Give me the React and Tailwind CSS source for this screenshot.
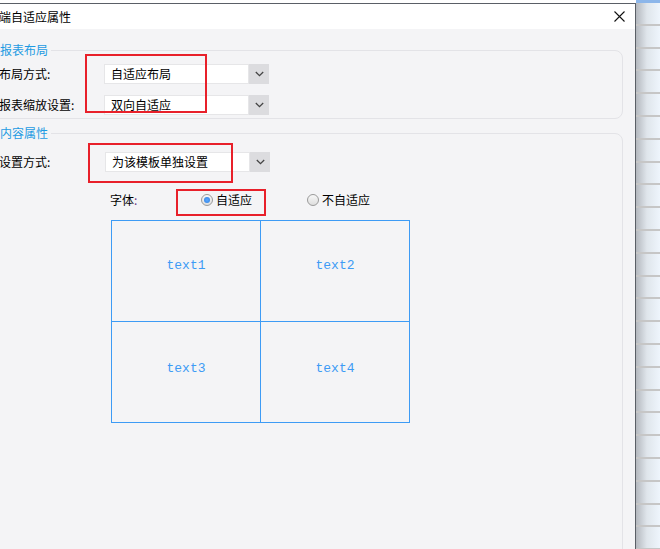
import React from "react";

const CJK = { fontFamily: '"Noto Sans CJK SC", "Noto Sans", sans-serif' };

function Chevron() {
  return (
    <svg width="9" height="6" viewBox="0 0 9 6">
      <path d="M0.8 1 L4.5 4.6 L8.2 1" fill="none" stroke="#444" strokeWidth="1.3" />
    </svg>
  );
}

function Select({ value }) {
  return (
    <div className="flex h-[20px] w-[165px]">
      <div className="flex-1 bg-white border border-[#e6e6e8] pl-[6px] flex items-center text-[12px] leading-[16px] text-black">
        {value}
      </div>
      <div className="w-[20px] bg-[#dcdcdf] flex items-center justify-center">
        <Chevron />
      </div>
    </div>
  );
}

function Radio({ checked }) {
  return (
    <div className="w-[12px] h-[12px] rounded-full border border-[#9a9a9a] bg-[linear-gradient(to_bottom,#f8f8f8,#dedede)] flex items-center justify-center">
      {checked && <div className="w-[6px] h-[6px] rounded-full bg-[radial-gradient(circle,#5aa8ff,#2f7fe0)]" />}
    </div>
  );
}

export default function App() {
  return (
    <div className="relative w-[660px] h-[549px] overflow-hidden flex bg-white" style={CJK}>
      {/* dialog */}
      <div className="w-[636px] flex flex-col">
        <div className="h-[3px] bg-white" />
        <div className="flex-1 flex flex-col border-t border-r border-[#5a5f66] overflow-hidden">
          <div className="h-[25px] bg-white flex items-center justify-between shrink-0">
            <span className="ml-[-1px] text-[12px] leading-[16px] text-black">端自适应属性</span>
            <svg width="11" height="11" viewBox="0 0 11 11" className="mr-[10px]">
              <path d="M0.5 0.5 L10.5 10.5 M10.5 0.5 L0.5 10.5" stroke="#111" strokeWidth="1.1" />
            </svg>
          </div>
          <div className="flex-1 bg-[#f4f4f6] pt-[13px]">
            {/* group 1 */}
            <fieldset className="ml-[-20px] w-[643px] border border-[#e3e3e7] rounded-[8px] pb-[3px]">
              <legend className="ml-[19px] pr-[3px] text-[12px] leading-[16px] text-[#1e9be2]">报表布局</legend>
              <div className="flex flex-col gap-[11px] mt-[6px] pl-[18px]">
                <div className="flex items-center">
                  <div className="w-[105px] text-[12px] leading-[16px] text-black">布局方式:</div>
                  <Select value="自适应布局" />
                </div>
                <div className="flex items-center">
                  <div className="w-[105px] text-[12px] leading-[16px] text-black">报表缩放设置:</div>
                  <Select value="双向自适应" />
                </div>
              </div>
            </fieldset>
            {/* group 2 */}
            <fieldset className="ml-[-20px] w-[643px] h-[440px] border border-[#e3e3e7] rounded-[8px] mt-[6px]">
              <legend className="ml-[19px] pr-[3px] text-[12px] leading-[16px] text-[#1e9be2]">内容属性</legend>
              <div className="mt-[11px] pl-[18px] flex items-center">
                <div className="w-[106px] text-[12px] leading-[16px] text-black">设置方式:</div>
                <Select value="为该模板单独设置" />
              </div>
              <div className="mt-[20px] h-[16px] flex items-center text-[12px] leading-[16px] text-black">
                <div className="ml-[129px] w-[91px]">
                  字体<span className="text-[#6b3a86]">:</span>
                </div>
                <Radio checked />
                <span className="ml-[3px] w-[91px]">自适应</span>
                <Radio />
                <span className="ml-[3px]">不自适应</span>
              </div>
              <div
                className="mt-[12px] ml-[130px] w-[299px] h-[203px] border border-[#3d9bf5] grid grid-cols-[149px_148px] grid-rows-[101px_100px] text-[13px] text-[#3d9bf5]"
                style={{ fontFamily: '"Liberation Mono", monospace' }}
              >
                <div className="border-r border-b border-[#3d9bf5] flex items-center justify-center pb-[10px]">text1</div>
                <div className="border-b border-[#3d9bf5] flex items-center justify-center pb-[10px]">text2</div>
                <div className="border-r border-[#3d9bf5] flex items-center justify-center pb-[6px]">text3</div>
                <div className="flex items-center justify-center pb-[6px]">text4</div>
              </div>
            </fieldset>
          </div>
        </div>
      </div>
      {/* background strip */}
      <div className="flex-1 flex flex-col">
        <div className="h-[3px] bg-[#8cb6ea]" />
        <div className="flex-1 bg-[linear-gradient(to_right,#b4b8be,#dfe5eb_45%,#eef5fc)]">
          <div className="h-full bg-[repeating-linear-gradient(to_bottom,transparent_0px,transparent_20.8px,#c6c6c6_20.8px,#c6c6c6_22.8px)]" />
        </div>
      </div>
      {/* annotations */}
      <div className="absolute left-[85px] top-[54px] w-[122px] h-[59px] border-2 border-[#e8202a]" />
      <div className="absolute left-[88px] top-[143px] w-[145px] h-[40px] border-2 border-[#e8202a]" />
      <div className="absolute left-[176px] top-[189px] w-[90px] h-[27px] border-2 border-[#e8202a]" />
    </div>
  );
}
